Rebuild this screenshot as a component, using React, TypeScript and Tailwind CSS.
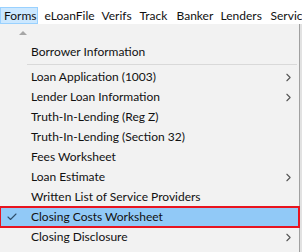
import { Check, ChevronRight } from 'lucide-react';

const menuBar = [
  { label: 'eLoanFile', w: 'w-[57px]' },
  { label: 'Verifs', w: 'w-[38px]' },
  { label: 'Track', w: 'w-[37px]' },
  { label: 'Banker', w: 'w-[44px]' },
  { label: 'Lenders', w: 'w-[50px]' },
  { label: 'Services', w: 'w-[60px]' },
];

const items: { label: string; sub?: boolean; checked?: boolean }[] = [
  { label: 'Loan Application (1003)', sub: true },
  { label: 'Lender Loan Information', sub: true },
  { label: 'Truth-In-Lending (Reg Z)' },
  { label: 'Truth-In-Lending (Section 32)' },
  { label: 'Fees Worksheet' },
  { label: 'Loan Estimate', sub: true },
  { label: 'Written List of Service Providers' },
  { label: 'Closing Costs Worksheet', checked: true },
  { label: 'Closing Disclosure', sub: true },
  { label: 'Good Faith Estimate' },
];

export default function App() {
  return (
    <div className="w-[302px] h-[252px] overflow-hidden bg-white flex flex-col text-[12px] text-[#111] font-['Lato','Liberation_Sans',sans-serif]">
      {/* Menu bar */}
      <div className="h-[24px] flex items-end shrink-0 whitespace-nowrap">
        <div className="w-[41px] h-[17px] flex items-center pl-[3px] leading-none bg-[#cce8ff] border border-[#99d1ff] mr-[3px]">
          Forms
        </div>
        {menuBar.map(m => (
          <div key={m.label} className={`${m.w} shrink-0 h-[17px] flex items-center pl-[4px] leading-none`}>
            {m.label}
          </div>
        ))}
      </div>

      {/* Dropdown */}
      <div className="flex-1 flex">
        <div className="w-[300px] bg-[#f2f2f2] border-r border-[#a0a0a0] flex flex-col">
          <div className="h-[18px] flex items-center pl-[19px]">
            <div className="w-0 h-0 border-l-[4px] border-r-[4px] border-b-[4px] border-l-transparent border-r-transparent border-b-[#a6a6a6]" />
          </div>
          <div className="h-[20px] flex items-center pl-[31px]">Borrower Information</div>
          <div className="h-[5px] flex items-center pl-[27px] pr-[2px]">
            <div className="h-px w-full bg-[#d9d9d9]" />
          </div>
          {items.map(it => (
            <div
              key={it.label}
              className={`h-[20px] shrink-0 flex items-center relative whitespace-nowrap ${
                it.checked ? 'bg-[#91c9f7] outline-2 outline-[#e8141f] -outline-offset-1' : ''
              }`}
            >
              <div className="w-[31px] flex justify-center pl-[2px] pr-[10px]">
                {it.checked && <Check className="w-[12px] h-[12px] text-[#2f4f6c]" strokeWidth={2.2} />}
              </div>
              <span>{it.label}</span>
              {it.sub && (
                <ChevronRight className="absolute left-[282px] w-[13px] h-[13px] text-[#555]" strokeWidth={2} />
              )}
            </div>
          ))}
        </div>
        <div className="w-[2px] bg-[#e2e2e2]" />
      </div>
    </div>
  );
}
